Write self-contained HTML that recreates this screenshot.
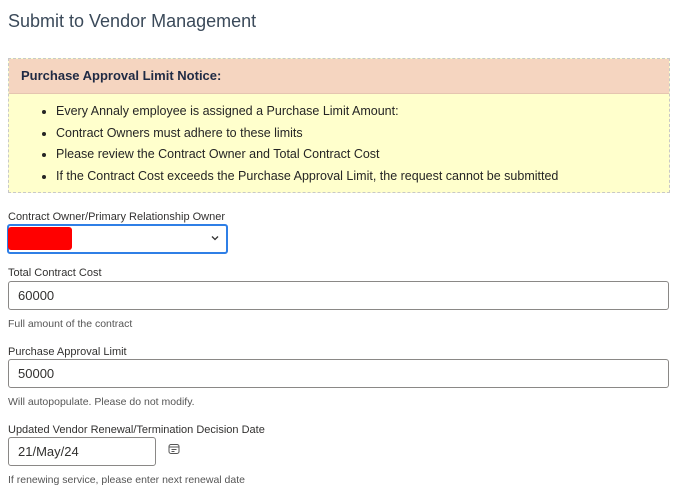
<!DOCTYPE html>
<html><head><style>
body{margin:0;background:#fff;font-family:"Liberation Sans",sans-serif;color:#323130;width:681px;height:502px;overflow:hidden;position:relative}
.a{position:absolute}
h1{position:absolute;left:8px;top:11px;margin:0;font-weight:normal;font-size:18px;color:#3b4a5a}
.notice{left:8px;top:58px;width:662px;height:135px;border:1px dashed #c8c8c8;background:#ffffcc;box-sizing:border-box}
.nh{height:34px;background:#f5d5c0;border-bottom:1px solid #e5c5b0;font-weight:bold;font-size:13px;color:#1f2a44;line-height:34px;padding-left:12px}
ul{margin:0;padding:7px 0 0 47px;font-size:12.5px;color:#252525}
li{height:21.5px;line-height:21.5px}
.lbl{font-size:11px;color:#323130}
.help{font-size:10.5px;color:#555}
.inp{border:1px solid #8a8886;border-radius:3px;box-sizing:border-box;font-size:13px;padding-left:9px;color:#323130}
</style></head><body>
<h1>Submit to Vendor Management</h1>
<div class="a notice"><div class="nh">Purchase Approval Limit Notice:</div>
<ul><li>Every Annaly employee is assigned a Purchase Limit Amount:</li><li>Contract Owners must adhere to these limits</li><li>Please review the Contract Owner and Total Contract Cost</li><li>If the Contract Cost exceeds the Purchase Approval Limit, the request cannot be submitted</li></ul></div>
<div class="a lbl" style="left:8px;top:211px">Contract Owner/Primary Relationship Owner</div>
<div class="a" style="left:7px;top:224px;width:221px;height:30px;border:2px solid #2f7fe6;border-radius:3px;box-sizing:border-box"></div>
<div class="a" style="left:8px;top:227px;width:64px;height:23px;background:#f00;border-radius:3px"></div>
<svg class="a" style="left:211px;top:235px" width="8" height="6"><path d="M1 1.5L4 4.5L7 1.5" stroke="#333" stroke-width="1.3" fill="none"/></svg>
<div class="a lbl" style="left:8px;top:267px">Total Contract Cost</div>
<div class="a inp" style="left:8px;top:281px;width:661px;height:29px;line-height:27px">60000</div>
<div class="a help" style="left:8px;top:318px">Full amount of the contract</div>
<div class="a lbl" style="left:8px;top:346px">Purchase Approval Limit</div>
<div class="a inp" style="left:8px;top:359px;width:661px;height:29px;line-height:27px">50000</div>
<div class="a help" style="left:8px;top:396px">Will autopopulate. Please do not modify.</div>
<div class="a lbl" style="left:8px;top:424px">Updated Vendor Renewal/Termination Decision Date</div>
<div class="a inp" style="left:8px;top:437px;width:148px;height:29px;line-height:27px">21/May/24</div>
<svg class="a" style="left:168px;top:443px" width="12" height="12"><rect x="1" y="1.5" width="10" height="9" rx="2" stroke="#555" fill="none"/><line x1="1" y1="4" x2="11" y2="4" stroke="#555"/><path d="M3.5 6.5h5M3.5 8.5h3" stroke="#555"/></svg>
<div class="a help" style="left:8px;top:474px">If renewing service, please enter next renewal date</div>
</body></html>
